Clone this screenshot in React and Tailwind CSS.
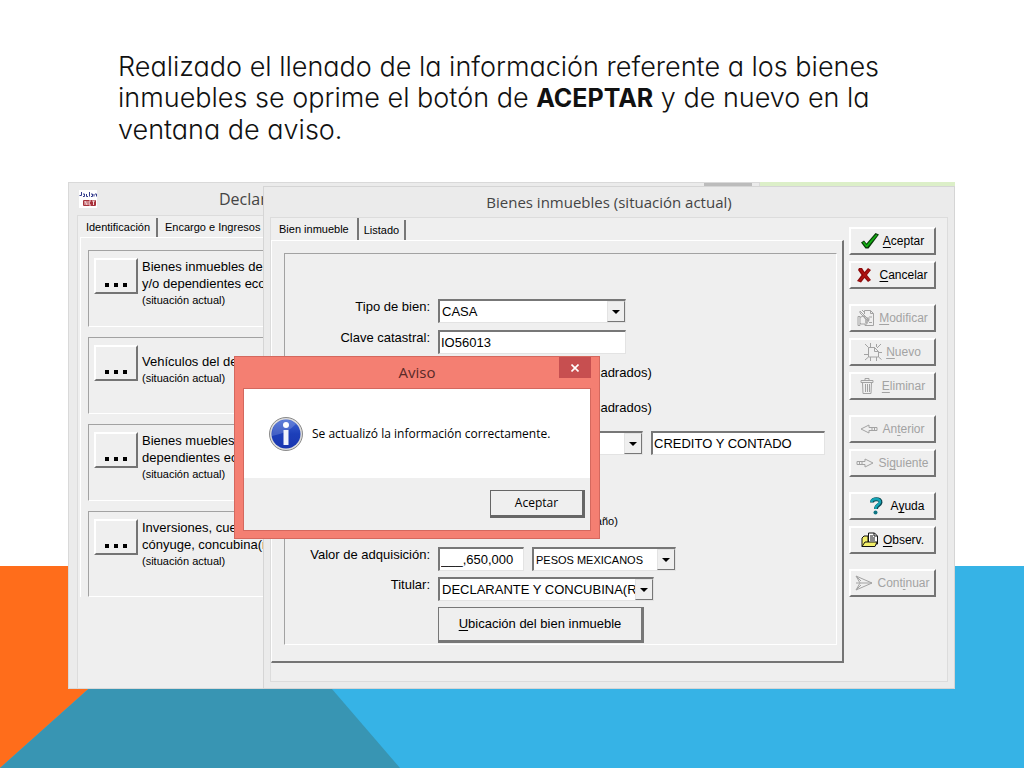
// App.jsx
const sections = [
  { id: "inmuebles", lines: ["Bienes inmuebles del declarante,", "y/o dependientes económicos"] },
  { id: "vehiculos", lines: ["Vehículos del declarante"] },
  { id: "muebles", lines: ["Bienes muebles del declarante,", "dependientes económicos"] },
  { id: "inversiones", lines: ["Inversiones, cuentas bancarias", "cónyuge, concubina(rio)"] },
];

const actionGroups = [
  [
    { key: "A", after: "ceptar", icon: CheckIcon },
    { key: "C", after: "ancelar", icon: CrossIcon },
  ],
  [
    { key: "M", after: "odificar", icon: EditIcon, disabled: true },
    { key: "N", after: "uevo", icon: NewIcon, disabled: true },
    { key: "E", after: "liminar", icon: TrashIcon, disabled: true },
  ],
  [
    { before: "An", key: "t", after: "erior", icon: LeftIcon, disabled: true },
    { before: "Si", key: "g", after: "uiente", icon: RightIcon, disabled: true },
  ],
  [
    { before: "A", key: "y", after: "uda", icon: HelpIcon },
    { key: "O", after: "bserv.", icon: FolderIcon },
  ],
  [{ before: "Cont", key: "i", after: "nuar", icon: SendIcon, disabled: true }],
];

const raised =
  "border-t-2 border-l-2 border-r-2 border-b-2 border-t-white border-l-white border-r-[#747474] border-b-[#747474] bg-[#efefef]";
const sunken =
  "border-t-2 border-l-2 border-r border-b border-t-[#777] border-l-[#777] border-r-[#e3e3e3] border-b-[#e3e3e3] bg-white";
const group =
  "border border-t-[#a2a2a2] border-l-[#a2a2a2] border-r-white border-b-white";

function CheckIcon() {
  return (
    <svg viewBox="0 0 18 16" className="w-[18px] h-4">
      <path d="M0 9.500l3-2 2.500 3L14.500 0 18 1.500 7.500 15.500H4.500z" fill="#0a3d0a" />
      <path d="M1.500 9.500l1.500-1L5.500 12 15 1.500l1.500.5L6.500 14H5z" fill="#12b012" />
    </svg>
  );
}

function CrossIcon() {
  return (
    <svg viewBox="0 0 14 16" className="w-[14px] h-4 mr-1">
      <path d="M2 1l3 0 2.500 4L11 1l3 2-4 5 4 5-3 2-3.500-4L4 15.500 0 14l4.500-6L1 3z" fill="#8f0a0a" />
      <path d="M3 2.500L12 13M12 3L2.500 14" stroke="#b01212" strokeWidth="1.500" />
    </svg>
  );
}

function EditIcon() {
  return (
    <svg viewBox="0 0 18 18" className="w-[18px] h-[18px]" fill="none" stroke="currentColor">
      <path d="M7.500 5V1.500h6l3 3v12H8V15M13.500 1.500v3h3" />
      <path d="M3 2l8 8 1 2-2-1-7-7zM5 1l3 3" />
      <path d="M1 7.500h2v9H1zM3 8.500l3-1.500h2l-1 2h5v2H8M8 11h3v2H8M8 13h2v2H4l-1-1M12 8h3M12 13.500h3" />
    </svg>
  );
}

function NewIcon() {
  return (
    <svg viewBox="0 0 18 18" className="w-[18px] h-[18px]" fill="none" stroke="currentColor">
      <path d="M4.500 4.500h6v4h4v5.500h-10zM10.500 4.500l4 4" />
      <path d="M1 1l3.500 3.500M17 1l-4 4M1 17l3.500-3M17.500 16.500l-3-2.500M6.500 0v4M12.500 1v3M0 11.500h4.500M14.500 9.500H18M6.500 14v4M12.500 14v4" />
    </svg>
  );
}

function TrashIcon() {
  return (
    <svg viewBox="0 0 14 18" className="w-[14px] h-[18px] mr-1" fill="none" stroke="currentColor">
      <path d="M1 3.500h12v2H1zM5 3.500v-2h4v2M2.500 5.500l.5 11h8l.5-11M5.500 7v8M7.500 7v8M9.500 7v8" />
    </svg>
  );
}

function LeftIcon() {
  return (
    <svg viewBox="0 0 18 10" className="w-[18px] h-[10px]" fill="none" stroke="currentColor">
      <path d="M1 5l8-4v2.500h3v3H9V9zM12 3.500h5v3h-5M14.500 3.500v3" />
    </svg>
  );
}

function RightIcon() {
  return (
    <svg viewBox="0 0 18 10" className="w-[18px] h-[10px]" fill="none" stroke="currentColor">
      <path d="M17 5L9 1v2.500H6v3h3V9zM6 3.500H1v3h5M3.500 3.500v3" />
    </svg>
  );
}

function HelpIcon() {
  return (
    <svg viewBox="0 0 14 18" className="w-[14px] h-[18px] ml-2 mr-1" fill="none">
      <path d="M3 5.500C3 1 12 1 11.500 5.500 11 8.500 7 8 7 12" stroke="#0b4650" strokeWidth="4" />
      <path d="M2.500 5C3 1 11.500 1 11 5 10.500 8 6.500 8 6.500 12" stroke="#14a3b4" strokeWidth="2.500" />
      <circle cx="6.500" cy="15.500" r="2" fill="#0e7482" />
    </svg>
  );
}

function FolderIcon() {
  return (
    <svg viewBox="0 0 18 16" className="w-[18px] h-4" stroke="#111">
      <path d="M1 14.500V6l2-2h4v10z" fill="#f4f06a" />
      <path d="M7.500 1h6l3 3v8h-9z" fill="#fff" />
      <path d="M9 4h3M9 6h5M9 8h5M13 1v3h3" fill="none" />
      <path d="M1 14.500L4 10h12l-2 4.500z" fill="#f4f06a" />
    </svg>
  );
}

function SendIcon() {
  return (
    <svg viewBox="0 0 18 16" className="w-[18px] h-4" fill="none" stroke="currentColor">
      <path d="M1 1l16 7L1 15l4-7zM5 8h12M1 1l5 5M1 15l5-5M1 8h3" />
    </svg>
  );
}

function InfoIcon() {
  return (
    <svg viewBox="0 0 36 36" className="w-9 h-9 shrink-0">
      <defs>
        <linearGradient id="info" x1="0" y1="0" x2="0" y2="1">
          <stop offset="0" stopColor="#3d63d2" />
          <stop offset=".5" stopColor="#1c3fb9" />
          <stop offset="1" stopColor="#1a36b0" />
        </linearGradient>
      </defs>
      <circle cx="18" cy="18" r="16.500" fill="#ddd" stroke="#8b8b8b" />
      <circle cx="18" cy="18" r="14.500" fill="url(#info)" />
      <path d="M4 18a14 14 0 0 1 24-10Q20 17 4 20z" fill="#fff" opacity=".18" />
      <circle cx="18" cy="9" r="3" fill="#fff" />
      <path d="M15.500 14h5v15h-5z" fill="#f1f3fb" />
    </svg>
  );
}

function Logo() {
  return (
    <svg viewBox="0 0 18 18" className="w-[18px] h-[18px]" role="img" aria-label="declaraNET">
      <rect width="18" height="18" fill="#fff" />
      <path d="M.5 5.500h2V2M4 6.500h1.500M4 4h1.500v2.500M7.500 4v2.500h1.500M10.500 2v4.500M12 4h1.500v2.500H12M15 6.500V4M16 4h1.500v2.500" stroke="#343c8c" fill="none" />
      <rect x="4" y="10" width="13" height="6" rx="1" fill="#a8323c" />
      <path d="M6 15v-4l2 4v-4M12 11h-2v4h2M10 13h1M13 11h3M14.500 11v4" stroke="#f3d6d8" fill="none" />
    </svg>
  );
}

function Select({ id, value, className = "", textClass = "text-[13px]" }) {
  return (
    <div className={`relative h-6 ${sunken} ${className}`}>
      <select
        id={id}
        aria-label={id}
        defaultValue={value}
        className={`block appearance-none w-full h-full pl-[2px] pr-[18px] bg-transparent outline-none whitespace-nowrap leading-4 ${textClass}`}
      >
        <option>{value}</option>
      </select>
      <span className="pointer-events-none absolute right-0 top-0 bottom-0 w-[18px] flex items-center justify-center bg-[#efefef] border border-l-[#e3e3e3] border-t-[#e3e3e3] border-r-[#777] border-b-[#777]">
        <svg viewBox="0 0 8 4" className="w-2 h-1">
          <path d="M0 0h8L4 4z" fill="#000" />
        </svg>
      </span>
    </div>
  );
}

function TextField({ id, value, className = "" }) {
  return (
    <input
      id={id}
      aria-label={id}
      defaultValue={value}
      className={`h-6 px-px text-[13px] outline-none ${sunken} ${className}`}
    />
  );
}

function Row({ label, id, children }) {
  return (
    <div className="flex gap-2">
      <label htmlFor={id} className="w-[145px] text-right text-[13px] leading-4 whitespace-nowrap shrink-0">
        {label}
      </label>
      <div className="flex items-center gap-2">{children}</div>
    </div>
  );
}

function ActionButton({ before, after, shortcut, icon: Icon, disabled }) {
  return (
    <button
      disabled={disabled}
      className={`h-7 w-full flex items-center justify-center gap-1 text-[12px] ${raised} ${
        disabled ? "text-[#a3a3a3]" : "text-black"
      }`}
    >
      <Icon />
      <span>
        {before}
        <u className="underline-offset-2">{shortcut}</u>
        {after}
      </span>
    </button>
  );
}

function DeclarationWindow() {
  return (
    <section className="absolute inset-y-0 left-0 w-[692px] flex flex-col overflow-hidden bg-[#ebebeb] border border-[#d9d9d9] pl-2">
      <header className="relative h-8 flex items-center px-[2px] shrink-0">
        <Logo />
        <h2 className="ml-[122px] text-[16px] text-[#444] font-['Open_Sans',sans-serif]">Declaración patrimonial</h2>
        <button aria-label="Cerrar" className="absolute right-[7px] top-0 w-12 h-5 bg-[#bcbcbc]" />
      </header>
      <div className="flex-1 border-l border-t border-[#dcdcdc] bg-[#efefef] pl-[2px] pt-[2px]">
        <nav className="flex h-[19px] text-[11px]">
          <button className="w-[78px] border-r-2 border-[#777] whitespace-nowrap">Identificación</button>
          <button className="px-[7px] whitespace-nowrap">Encargo e Ingresos</button>
        </nav>
        <div className="border-t border-l border-white pt-3 pl-[7px] flex flex-col gap-[10px]">
          {sections.map((s) => (
            <div key={s.id} className={`${group} h-[77px] last:h-[86px] flex gap-1 pt-[7px] pl-[5px]`}>
              <button
                aria-label={s.lines[0]}
                className={`w-11 h-9 flex items-end justify-center gap-[5px] pb-[5px] shrink-0 ${raised}`}
              >
                <i className="size-1 bg-black" />
                <i className="size-1 bg-black" />
                <i className="size-1 bg-black" />
              </button>
              <div className="h-[50px] flex flex-col justify-center text-[13px] leading-[17px] whitespace-nowrap">
                {s.lines.map((l) => (
                  <p key={l}>{l}</p>
                ))}
                <p className="text-[11px]">(situación actual)</p>
              </div>
            </div>
          ))}
        </div>
      </div>
    </section>
  );
}

function PropertyForm() {
  return (
    <div className={`${group} flex-1 pt-[45px] flex flex-col`}>
      <div className="flex flex-col gap-[7px]">
        <Row label="Tipo de bien:" id="tipo">
          <Select id="tipo" value="CASA" className="w-[188px]" />
        </Row>
        <Row label="Clave catastral:" id="clave">
          <TextField id="clave" value="IO56013" className="w-[188px]" />
        </Row>
      </div>
      <div className="mt-[7px] flex flex-col gap-[11px]">
        <Row id="terreno">
          <TextField id="terreno" className="w-[93px]" />
          <span className="text-[13px] leading-4">(metros cuadrados)</span>
        </Row>
        <Row id="construccion">
          <TextField id="construccion" className="w-[93px]" />
          <span className="text-[13px] leading-4">(metros cuadrados)</span>
        </Row>
        <Row id="forma">
          <Select id="forma" value="" className="w-[205px]" />
          <TextField id="detalle" value="CREDITO Y CONTADO" className="w-[174px]" />
        </Row>
      </div>
      <div className="mt-[54px] flex flex-col gap-[6px]">
        <Row id="fecha">
          <TextField id="fecha" className="w-[104px]" />
          <span className="text-[11px] leading-4">(día/mes/año)</span>
        </Row>
        <div className="pt-2">
          <Row label="Valor de adquisición:" id="valor">
            <TextField id="valor" value="___,650,000" className="w-[86px]" />
            <Select id="moneda" value="PESOS MEXICANOS" className="w-[144px]" textClass="text-[11px]" />
          </Row>
        </div>
        <Row label="Titular:" id="titular">
          <Select id="titular" value="DECLARANTE Y CONCUBINA(RIO)" className="w-[216px]" />
        </Row>
        <button className="ml-[153px] w-[206px] h-9 text-[13px] border border-r-[3px] border-b-[3px] border-[#777] bg-[#efefef]">
          <u className="underline-offset-2">U</u>bicación del bien inmueble
        </button>
      </div>
    </div>
  );
}

function PropertyWindow() {
  return (
    <section className="relative ml-[195px] mt-[3px] flex flex-col bg-[#ebebeb] border border-[#d5d5d5] px-[6px] pb-[6px]">
      <header className="h-[30px] flex items-center justify-center text-[15px] text-[#444] font-['Open_Sans',sans-serif]">
        <h2>Bienes inmuebles (situación actual)</h2>
      </header>
      <div className="flex h-[465px] border border-[#dcdcdc] bg-[#efefef] pr-[11px] gap-[5px]">
        <div className="flex-1 flex flex-col pb-[18px]">
          <nav className="flex items-end h-[22px] text-[11px]">
            <button className="h-[22px] px-2 border-r-2 border-[#777] whitespace-nowrap">Bien inmueble</button>
            <button className="h-5 px-[5px] border-r-2 border-[#777] whitespace-nowrap">Listado</button>
          </nav>
          <div className="flex-1 flex flex-col border-t border-l border-r-2 border-b-2 border-t-white border-l-white border-r-[#747474] border-b-[#747474] pt-3 pl-3 pr-[5px] pb-4">
            <PropertyForm />
          </div>
        </div>
        <aside className="w-[87px] pt-[9px] flex flex-col gap-[15px]">
          {actionGroups.map((actions, i) => (
            <div key={i} className="flex flex-col gap-[6px]">
              {actions.map(({ key, ...a }) => (
                <ActionButton key={a.after} shortcut={key} {...a} />
              ))}
            </div>
          ))}
        </aside>
      </div>
    </section>
  );
}

function NoticeDialog() {
  return (
    <div
      role="dialog"
      aria-label="Aviso"
      className="absolute left-[166px] top-[174px] w-[366px] flex flex-col bg-[#f47f72] border border-[#d4685e] px-2 pb-[7px]"
    >
      <header className="relative h-[31px] flex items-center justify-center text-[15px] text-[#5a2a28] font-['Open_Sans',sans-serif]">
        <h2>Aviso</h2>
        <button aria-label="Cerrar" className="absolute right-0 top-0 w-8 h-[21px] flex items-center justify-center bg-[#c74f50]">
          <svg viewBox="0 0 8 8" className="w-2 h-2">
            <path d="M.5.5l7 7M7.500.5l-7 7" stroke="#fff" strokeWidth="1.600" />
          </svg>
        </button>
      </header>
      <div className="border border-[#d4685e] bg-[#efefef]">
        <div className="h-[89px] flex items-center gap-2 pl-6 bg-white text-[12px] font-['Open_Sans',sans-serif]">
          <InfoIcon />
          <p>Se actualizó la información correctamente.</p>
        </div>
        <div className="h-[52px] flex items-center justify-end pr-[5px]">
          <button className="w-[95px] h-7 border border-r-[3px] border-b-[3px] border-[#666] bg-[#efefef] text-[12px] font-['Open_Sans',sans-serif]">
            Aceptar
          </button>
        </div>
      </div>
    </div>
  );
}

export default function App() {
  return (
    <main className="relative min-h-screen bg-white overflow-hidden text-black font-['Liberation_Sans',Arial,sans-serif]">
      <svg
        viewBox="0 0 1024 202"
        preserveAspectRatio="none"
        className="absolute inset-x-0 bottom-0 w-full h-[202px]"
        aria-hidden="true"
      >
        <rect width="1024" height="202" fill="#36b3e6" />
        <path d="M0 0h226L0 202z" fill="#ff6d1b" />
        <path d="M226 0l174 202H0z" fill="#3895b3" />
      </svg>
      <div className="relative pl-[68px] pr-[69px] pt-[51px]">
        <p className="pl-[50px] h-[131px] text-[27px] leading-[31px] text-[#111] font-light font-['Inter',sans-serif] [font-feature-settings:'cv11']">
          Realizado el llenado de la información referente a los bienes
          <br />
          inmuebles se oprime el botón de <strong className="text-[25px] font-bold">ACEPTAR</strong> y de nuevo en la
          <br />
          ventana de aviso.
        </p>
        <div className="relative pt-px bg-[#dcefc8]">
          <DeclarationWindow />
          <PropertyWindow />
          <NoticeDialog />
        </div>
      </div>
    </main>
  );
}
